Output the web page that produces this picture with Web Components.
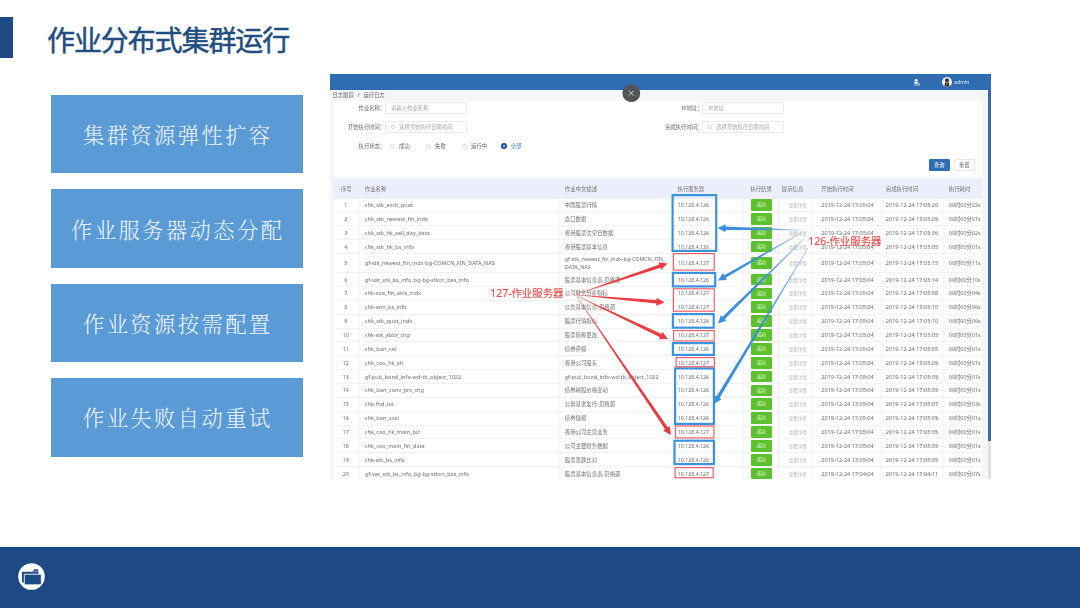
<!DOCTYPE html>
<html>
<head>
<meta charset="utf-8">
<title>作业分布式集群运行</title>
<style>
	html, body {
		margin: 0;
		width: 1080px;
		height: 608px;
		overflow: hidden;
		background: #fff;
	}
</style>
</head>
<body>
<slide-page>
	<slide-title slot="title">作业分布式集群运行</slide-title>
	<feature-card slot="features">集群资源弹性扩容</feature-card>
	<feature-card slot="features">作业服务器动态分配</feature-card>
	<feature-card slot="features">作业资源按需配置</feature-card>
	<feature-card slot="features">作业失败自动重试</feature-card>
	<log-panel slot="panel"></log-panel>
	<slide-footer slot="footer"></slide-footer>
</slide-page>

<script>
class BaseComponent extends HTMLElement {
	constructor() {
		super();

		this.attachShadow({ mode: "open" });
		this.shadowRoot.innerHTML = this.template();
	}
}

class SlidePage extends BaseComponent {
	template() {
		return `
			<style>
				:host {
					display: flex;
					flex-direction: column;
					width: 1080px;
					height: 608px;
					background: #fff;
					font-family: "Noto Sans", "Noto Sans CJK SC", sans-serif;
				}
				main {
					flex: 1;
					display: flex;
					align-items: flex-start;
					padding: 0 0 0 50.5px;
				}
				.features {
					display: flex;
					flex-direction: column;
					gap: 15.6px;
					width: 252.5px;
					margin: 20.6px 27px 0 0;
				}
			</style>
			<slot name="title"></slot>
			<main>
				<div class="features"><slot name="features"></slot></div>
				<slot name="panel"></slot>
			</main>
			<slot name="footer"></slot>
		`;
	}
}

class SlideTitle extends BaseComponent {
	template() {
		return `
			<style>
				:host {
					display: flex;
					align-items: center;
					height: 41px;
					padding: 17px 0 16px;
					color: #1f4e7f;
					font: 400 28px/41px "Noto Sans CJK SC", sans-serif;
					letter-spacing: -1.1px;
					-webkit-text-stroke: 0.5px #1f4e7f;
				}
				.bar {
					width: 12.7px;
					height: 41px;
					margin-right: 34.3px;
					background: #1d4985;
				}
				.text {
					margin-top: 3px;
				}
			</style>
			<div class="bar"></div>
			<div class="text"><slot></slot></div>
		`;
	}
}

class FeatureCard extends BaseComponent {
	template() {
		return `
			<style>
				:host {
					display: flex;
					align-items: center;
					justify-content: center;
					box-sizing: border-box;
					height: 78.9px;
					padding: 0 0 0 2px;
					background: #5b9bd5;
					color: #edf4fb;
					font: 300 21.3px/30px "Noto Serif CJK SC", "Noto Sans CJK SC", serif;
					letter-spacing: 2.4px;
				}
			</style>
			<slot></slot>
		`;
	}
}

class SlideFooter extends BaseComponent {
	template() {
		return `
			<style>
				:host {
					display: flex;
					align-items: center;
					box-sizing: border-box;
					height: 61px;
					padding: 0 0 2px 18px;
					background: #1d4985;
				}
			</style>
			<svg width="27" height="27" viewBox="0 0 27 27">
				<circle cx="13.5" cy="13.5" r="13.3" fill="#fff"/>
				<path d="M4 19.5V8.7h10.5l1.8-2.5h3.9v2.7h.3v2H6.5v8.6z" fill="#1d4985"/>
				<path d="M6.3 11.2h17v10.6h-17z" fill="#1d4985" stroke="#fff" stroke-width=".8"/>
				<path d="M15.2 9.7l1.3-1.5h3.3" fill="none" stroke="#fff" stroke-width=".5"/>
			</svg>
		`;
	}
}

class PanelHeader extends BaseComponent {
	template() {
		return `
			<style>
				:host {
					display: flex;
					align-items: center;
					justify-content: flex-end;
					box-sizing: border-box;
					height: 15.5px;
					padding-right: 22px;
					background: #2f6db3;
					color: #e3edf8;
					font-size: 5px;
				}
				.tool {
					margin-right: 21px;
				}
				.avatar {
					margin-right: 2.5px;
				}
			</style>
			<svg class="tool" width="8" height="8" viewBox="0 0 8 8">
				<circle cx="3.2" cy="2.2" r="1.5" fill="#e3edf8"/>
				<path d="M1.5 4h3.5l.5 1.8H1z" fill="#e3edf8"/>
				<path d="M1 7h6.3M5.5 5.2l1.6 1.3" stroke="#e3edf8" stroke-width=".8"/>
			</svg>
			<svg class="avatar" width="10" height="10" viewBox="0 0 10 10">
				<circle cx="5" cy="5" r="5" fill="#eee"/>
				<circle cx="5" cy="3.2" r="2" fill="#333"/>
				<path d="M2.6 9.4l.4-3.6 2-1 2 1 .4 3.6z" fill="#292929"/>
				<path d="M4.5 4.8h1L5.3 8h-.6z" fill="#e8c36a"/>
			</svg>
			<span>admin</span>
		`;
	}
}

class SearchForm extends BaseComponent {
	template() {
		return `
			<style>
				:host {
					display: block;
					box-sizing: border-box;
					height: 76px;
					padding-top: 1px;
					background: #fff;
					font-size: 5.3px;
					line-height: 8px;
					color: #666;
				}
				.fields {
					display: grid;
					grid-template-columns: 52.3px 82px 235.2px 82px;
					grid-auto-rows: 12px;
					row-gap: 7px;
					align-items: center;
				}
				label {
					text-align: right;
					padding-right: 2px;
					margin-right: -2px;
				}
				.input {
					display: flex;
					align-items: center;
					box-sizing: border-box;
					height: 12px;
					padding-left: 5px;
					border: 1px solid #ececf0;
					border-radius: 1px;
					color: #a5a5ab;
				}
				.input svg {
					margin-right: 4px;
				}
				.radios {
					display: flex;
					grid-column: span 3;
					padding-left: 5px;
				}
				.radio {
					display: flex;
					align-items: center;
					width: 36px;
				}
				.radio i {
					box-sizing: border-box;
					width: 5px;
					height: 5px;
					margin-right: 4px;
					border: .6px solid #ddd;
					border-radius: 50%;
				}
				.radio.active {
					color: #2f6db3;
				}
				.radio.active i {
					width: 5.6px;
					height: 5.6px;
					border: 0;
					background: radial-gradient(#a9c4e4 .6px, #23579a 1.4px);
				}
				.buttons {
					display: flex;
					justify-content: flex-end;
					gap: 4px;
					margin-top: 6.5px;
					padding-right: 7.5px;
				}
				.btn {
					box-sizing: border-box;
					width: 21px;
					height: 12px;
					border: 1px solid #e8e8ec;
					border-radius: 1px;
					line-height: 10px;
					text-align: center;
				}
				.btn.primary {
					border-color: #2f6db3;
					background: #2f6db3;
					color: #fff;
				}
			</style>
			<div class="fields">
				<label>作业名称：</label><div class="input">请输入作业名称</div>
				<label>IP地址：</label><div class="input">IP地址</div>
				<label>开始执行时间：</label><div class="input">${clockIcon}选择开始执行日期时间</div>
				<label>完成执行时间：</label><div class="input">${clockIcon}选择开始执行日期时间</div>
				<label>执行状态：</label>
				<div class="radios">
					<div class="radio"><i></i>成功</div>
					<div class="radio"><i></i>失败</div>
					<div class="radio" style="width: 39px"><i></i>运行中</div>
					<div class="radio active"><i></i>全部</div>
				</div>
			</div>
			<div class="buttons">
				<div class="btn primary">查询</div>
				<div class="btn">重置</div>
			</div>
		`;
	}
}

var clockIcon = `<svg width="4" height="4" viewBox="0 0 4 4"><circle cx="2" cy="2" r="1.6" fill="none" stroke="#bbb" stroke-width=".6"/></svg>`;

// name, description, server, end time, duration
var jobs = [
	["chk_stk_exch_quot", "中国股票行情", 126, "17:05:26", "22s"],
	["chk_stk_newest_fin_indx", "盘口数据", 126, "17:05:05", "01s"],
	["chk_stk_hk_sell_day_data", "香港股票沽空日数据", 126, "17:05:06", "02s"],
	["chk_stk_hk_bs_info", "香港股票基本信息", 126, "17:05:05", "01s"],
	["gf-stk_newest_fin_indx-bg-COMCN_FIN_DATA_NAS", "gf-stk_newest_fin_indx-bg-COMCN_FIN_<br>DATA_NAS", 127, "17:05:15", "11s"],
	["gf-var_stk_bs_info_bg-bg-stkcn_bas_info", "股票基本信息表-贝格源", 126, "17:05:14", "10s"],
	["chk-coo_fin_anls_indx", "公司财务分析指标", 127, "17:05:08", "04s"],
	["chk-ann_bs_info", "公告基本信息-贝格源", 127, "17:05:10", "06s"],
	["chk_stk_quot_indx", "股票行情指标", 126, "17:05:10", "06s"],
	["chk-stk_abbr_chg", "股票简称更改", 127, "17:05:05", "01s"],
	["chk_bon_rat", "债券评级", 126, "17:05:05", "01s"],
	["chk_coo_hk_sh", "香港公司股东", 127, "17:05:05", "01s"],
	["gf-pub_bond_info-wd-tb_object_1022", "gf-pub_bond_info-wd-tb_object_1022", 126, "17:05:05", "01s"],
	["chk_bon_conv_prc_chg", "债券转股价格变动", 126, "17:05:05", "01s"],
	["chk-fnd_iss", "公募基金发行-贝格源", 126, "17:05:07", "03s"],
	["chk_bon_scal", "债券规模", 126, "17:05:05", "01s"],
	["chk_coo_hk_main_biz", "香港公司主营业务", 127, "17:05:05", "01s"],
	["chk_coo_main_fin_data", "公司主要财务数据", 126, "17:05:05", "01s"],
	["chk-stk_bs_info", "股票涨跌比对", 126, "17:05:05", "01s"],
	["gf-var_stk_bs_info_bg-bg-stkcn_bas_info", "股票基本信息表-贝格源", 127, "17:04:11", "07s"]
];

class LogTable extends BaseComponent {
	row(job, i) {
		var start = i == 19 ? "17:04:04" : "17:05:04";
		return `
			<div class="row${i == 4 ? " tall" : ""}">
				<div class="idx">${i + 1}</div>
				<div class="name">${job[0]}</div>
				<div>${job[1]}</div>
				<div class="ip">10.128.4.${job[2]}</div>
				<div class="state"><span>成功</span></div>
				<div class="tip">查看详情</div>
				<div class="time">2019-12-24 ${start}</div>
				<div class="time">2019-12-24 ${job[3]}</div>
				<div>00时00分${job[4]}</div>
			</div>
		`;
	}

	template() {
		return `
			<style>
				:host {
					display: block;
					background: #fff;
					color: #707070;
					font-size: 5.4px;
					line-height: 8px;
				}
				.row {
					display: grid;
					grid-template-columns: 27px 200px 113px 71px 35px 33px 69px 63px 38px;
					height: 13.87px;
					box-sizing: border-box;
					border-bottom: 1px solid #f3f3f5;
				}
				.row.tall {
					height: 19.2px;
				}
				.row.head {
					height: 20px;
					padding-top: 1px;
					border: 0;
					background: #ebeefb;
				}
				.row > div {
					display: flex;
					align-items: center;
					box-sizing: border-box;
					padding-left: 5px;
					border-right: 1px solid #f6f6f8;
					white-space: nowrap;
					overflow: hidden;
				}
				.row.head > div,
				.row > div:last-child {
					border: 0;
				}
				.row > .idx {
					justify-content: center;
					padding: 0;
				}
				.row > .name {
					font-size: 5.55px;
				}
				.row > .time {
					padding-left: 9.5px;
					font-size: 5.55px;
				}
				.row > .time + .time {
					padding-left: 5px;
				}
				.row.head > .time {
					font-size: 5.4px;
				}
				.ip {
					font-size: 5.25px;
				}
				.row > .state {
					padding-left: 7px;
				}
				.state span {
					width: 21px;
					height: 11.8px;
					border-radius: 1px;
					background: #5dc02f;
					color: #e8f8df;
					font-size: 4.6px;
					line-height: 11.6px;
					text-align: center;
				}
				.row > .tip {
					padding-left: 10px;
					color: #b5b5b5;
					font-size: 4.5px;
				}
				.head .res {
					padding-left: 6.5px;
				}
				.head .hint {
					padding-left: 3px;
				}
			</style>
			<div class="row head">
				<div class="idx">序号</div>
				<div>作业名称</div>
				<div>作业中文描述</div>
				<div class="ip">执行服务器</div>
				<div class="res">执行结果</div>
				<div class="hint">提示信息</div>
				<div class="time">开始执行时间</div>
				<div class="time">完成执行时间</div>
				<div>执行耗时</div>
			</div>
			${jobs.map((job, i) => this.row(job, i)).join("")}
		`;
	}
}

class ServerMarks extends BaseComponent {
	// tapered arrow, thin at its tail
	arrow(x1, y1, x2, y2, color, width) {
		var len = Math.hypot(x2 - x1, y2 - y1);
		var angle = Math.atan2(y2 - y1, x2 - x1) * 180 / Math.PI;
		var neck = len - 8;
		return `<path transform="translate(${x1} ${y1}) rotate(${angle})" fill="url(#${color})"
			d="M0 -.3L${neck} ${-width}V-4L${len} 0L${neck} 4V${width}L0 .3z"/>`;
	}

	box(x1, y1, x2, y2, color, width) {
		return `<rect x="${x1 + width / 2}" y="${y1 + width / 2}" width="${x2 - x1 - width}" height="${y2 - y1 - width}"
			fill="none" stroke="${color}" stroke-width="${width}"/>`;
	}

	template() {
		var blue = [
			[671.5, 194, 717.3, 252], [671.8, 271.8, 716.3, 287.5], [671.8, 313, 714.8, 328.8],
			[671.8, 342, 715, 356], [674, 367.3, 715, 425], [673.4, 439.6, 715, 465.2]
		];
		var red = [
			[672.8, 253, 714.8, 270.7], [672.8, 288.2, 714.8, 311.8], [673, 330, 714.8, 341.5],
			[675.5, 357, 715, 367.3], [674.8, 425.4, 714.5, 438.5], [674.5, 467, 713.8, 478.3]
		];
		return `
			<style>
				:host {
					display: block;
				}
				svg {
					display: block;
				}
				text {
					font-size: 10.4px;
					fill: #ef4444;
					stroke: #ef4444;
					stroke-width: .1px;
				}
			</style>
			<svg width="662" height="405" viewBox="330 74 662 405">
				<defs>
					<linearGradient id="red"><stop offset="0" stop-color="#ef5a5a" stop-opacity=".6"/><stop offset=".3" stop-color="#e93c41"/></linearGradient>
					<linearGradient id="blue"><stop offset="0" stop-color="#5a9ae0" stop-opacity=".5"/><stop offset=".5" stop-color="#3d8fdd"/></linearGradient>
				</defs>
				${blue.map(b => this.box(...b, "#3b93e0", 2.2)).join("")}
				${red.map(b => this.box(...b, "#ee6065", 1.2)).join("")}
				${this.arrow(577, 294, 667.5, 263.5, "red", 1.7)}
				${this.arrow(577, 295, 664.5, 302.5, "red", 1.8)}
				${this.arrow(577, 296, 668, 339, "red", 1.8)}
				${this.arrow(577, 297, 671, 435, "red", 1.7)}
				${this.arrow(801, 230, 717.5, 228, "blue", 1.7)}
				${this.arrow(801, 233, 718, 280.5, "blue", 1.5)}
				${this.arrow(804, 239, 718, 323.5, "blue", 1.7)}
				${this.arrow(808, 248, 714, 404, "blue", 1.7)}
				<text x="490.3" y="297">127-作业服务器</text>
				<text x="808.3" y="244.8">126-作业服务器</text>
				<circle cx="631.3" cy="93.2" r="8.9" fill="#535457"/>
				<path d="M628.9 90.8l4.8 4.8M633.7 90.8l-4.8 4.8" stroke="#ddd" stroke-width=".9"/>
			</svg>
		`;
	}
}

class LogPanel extends BaseComponent {
	template() {
		return `
			<style>
				:host {
					display: block;
					position: relative;
					width: 661.3px;
					height: 404.7px;
					overflow: hidden;
					background: #f5f6f9;
				}
				.screen {
					filter: blur(.55px);
				}
				.crumbs {
					height: 11.5px;
					padding-left: 2.5px;
					color: #666;
					font-size: 5.3px;
					line-height: 10.5px;
					word-spacing: 2.5px;
				}
				.body {
					display: flex;
					justify-content: space-between;
				}
				.content {
					width: 649.5px;
					margin-left: 2.8px;
				}
				search-form {
					margin-bottom: 1.5px;
				}
				.scroll {
					width: 3.3px;
					height: 389px;
					margin-top: -11.5px;
					background: linear-gradient(#3c69ad 351px, #dfe1e5 351px);
				}
				server-marks {
					position: absolute;
					left: 0;
					top: 0;
					filter: blur(.3px);
				}
			</style>
			<div class="screen">
				<panel-header></panel-header>
				<div class="crumbs">日志跟踪 / 运行日志</div>
				<div class="body">
					<div class="content">
						<search-form></search-form>
						<log-table></log-table>
					</div>
					<div class="scroll"></div>
				</div>
			</div>
			<server-marks></server-marks>
		`;
	}
}

window.customElements.define("slide-title", SlideTitle);
window.customElements.define("feature-card", FeatureCard);
window.customElements.define("slide-footer", SlideFooter);
window.customElements.define("panel-header", PanelHeader);
window.customElements.define("search-form", SearchForm);
window.customElements.define("log-table", LogTable);
window.customElements.define("server-marks", ServerMarks);
window.customElements.define("log-panel", LogPanel);
window.customElements.define("slide-page", SlidePage);
</script>
</body>
</html>
